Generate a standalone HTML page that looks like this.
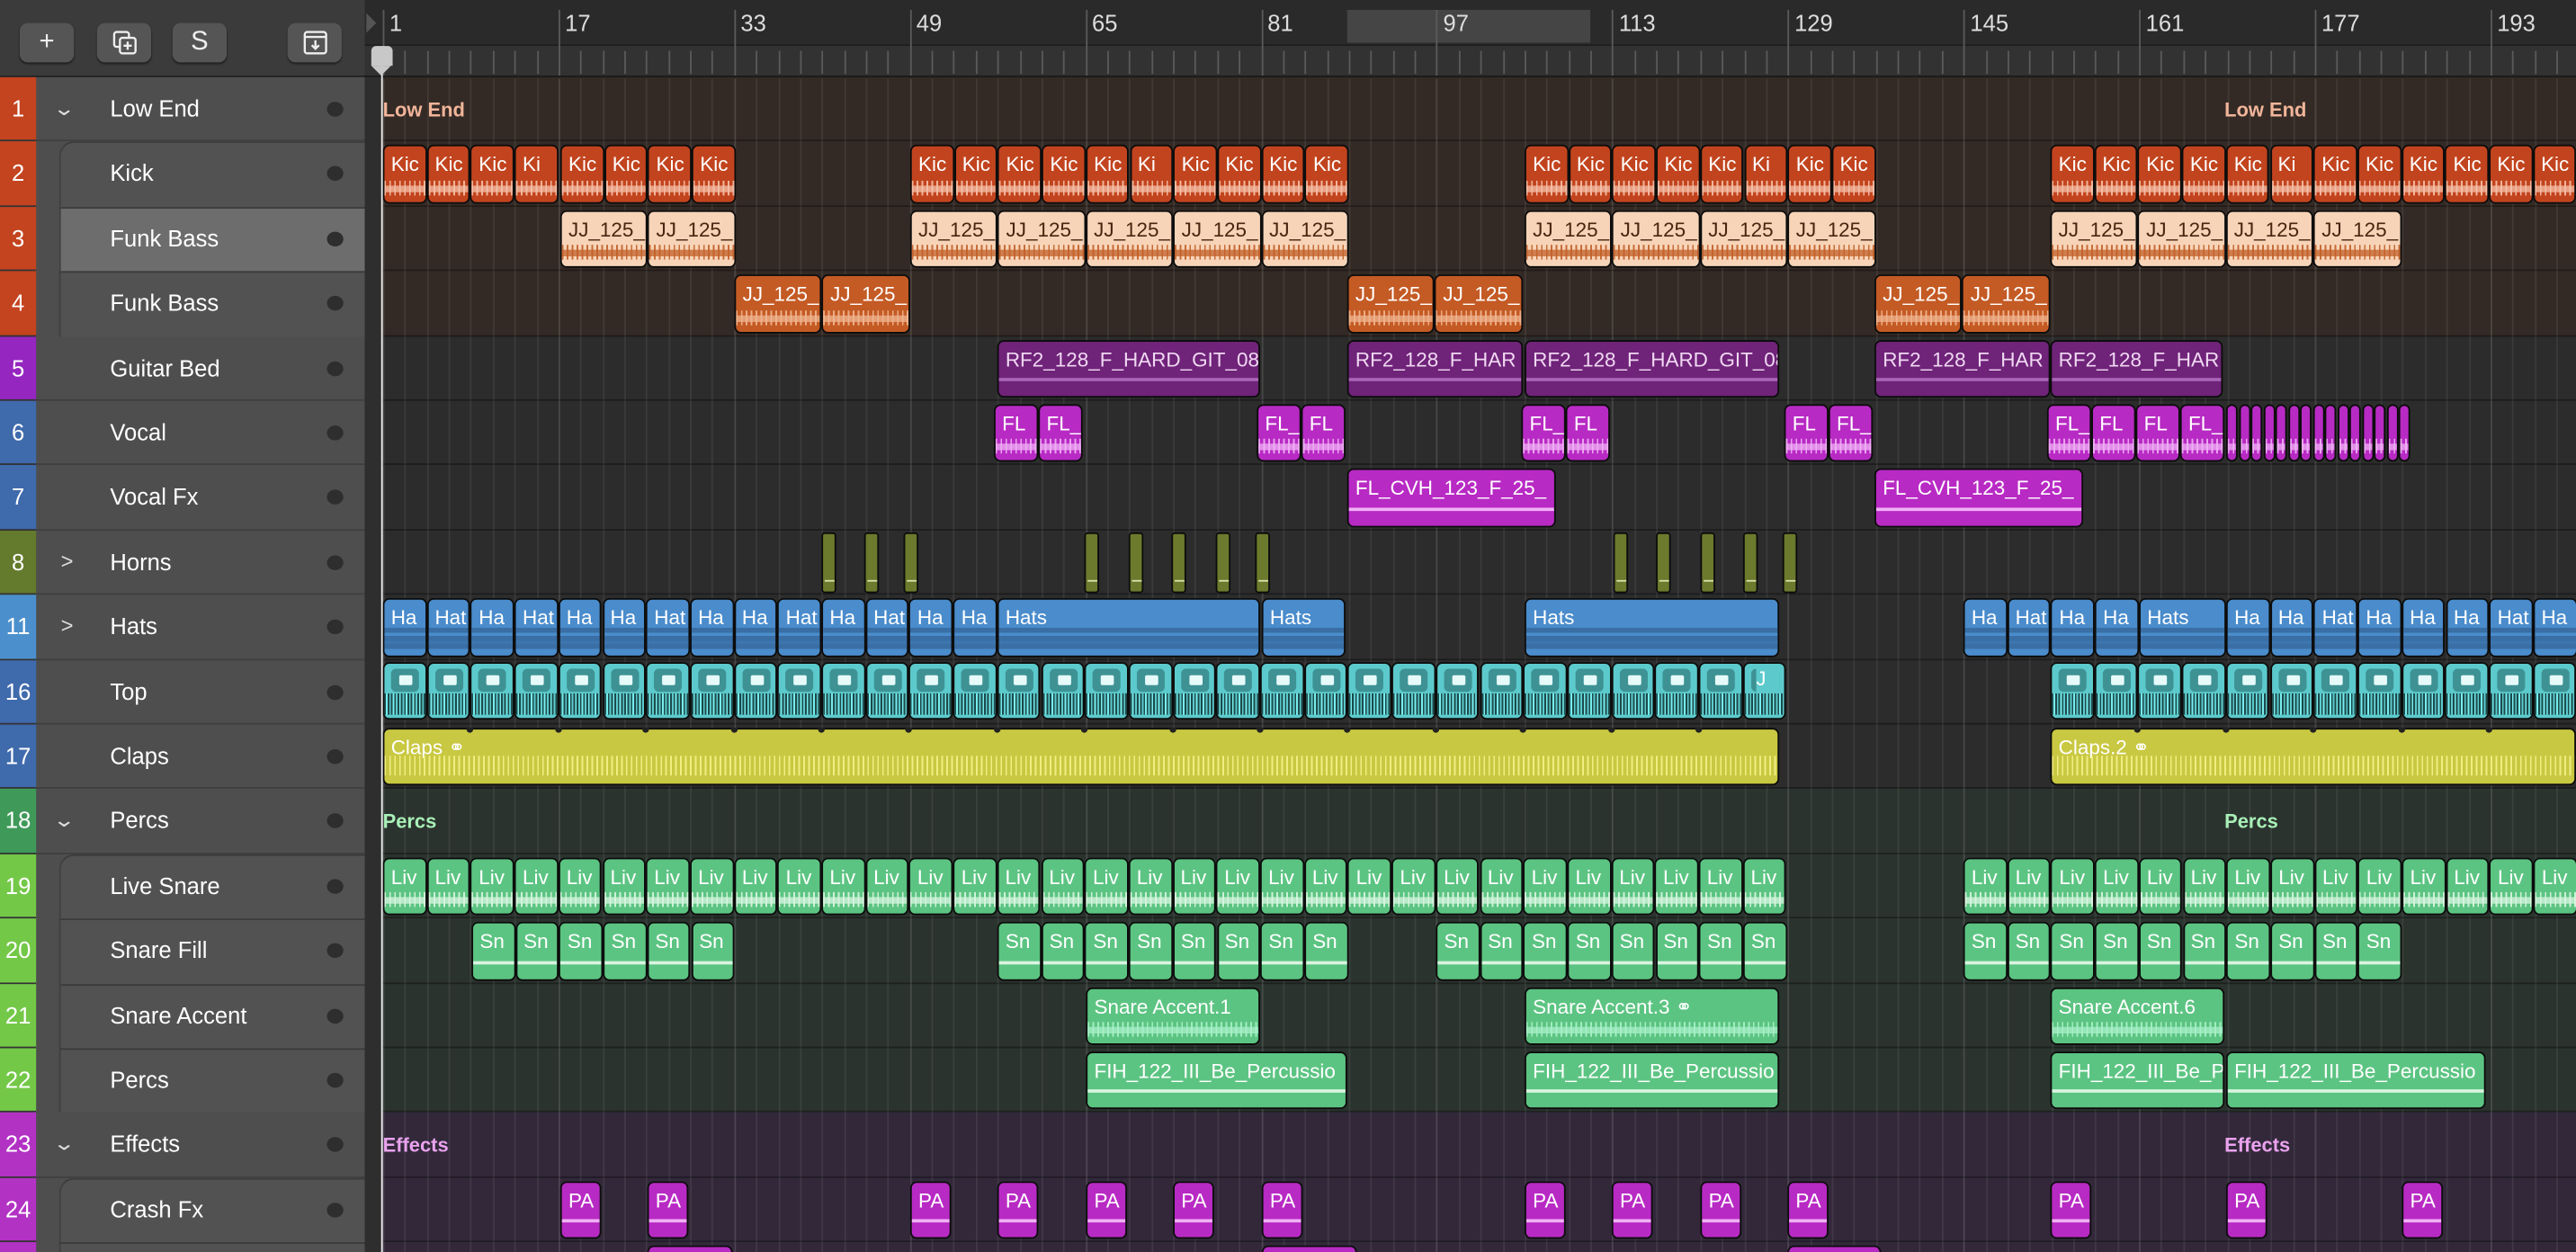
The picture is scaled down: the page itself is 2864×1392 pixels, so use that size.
<!DOCTYPE html>
<html><head><meta charset="utf-8">
<style>
html,body{margin:0;padding:0;background:#2b2b2b;overflow:hidden;width:2864px;height:1392px}
#root{position:absolute;left:0;top:0;width:1568px;height:762px;transform-origin:0 0;transform:scale(1.826531,1.826772);font-family:"Liberation Sans",sans-serif;overflow:hidden;background:#2c2c2c}
.a{position:absolute;box-sizing:border-box}
.rg{position:absolute;box-sizing:border-box;border:1.5px solid #0c0c0c;border-radius:4px;overflow:hidden}
.rg .t{position:absolute;left:4px;top:4px;font-size:12.3px;white-space:nowrap;line-height:15px}
.rg .w{position:absolute;left:0;right:0;bottom:4px;height:9px}
.num{position:absolute;left:0;width:22px;color:#fff;font-size:14px;text-align:center;box-sizing:border-box;border-bottom:1px solid #333}
.tn{position:absolute;color:#fff;font-size:14px}
.dot{position:absolute;width:10px;height:9px;border-radius:50%;background:#2e2e2e}
</style></head><body><div id="root"></div>
<script>
const R=document.getElementById('root');
function el(cls,st,html){const d=document.createElement('div');d.className=cls;d.style.cssText=st;if(html!==undefined)d.innerHTML=html;R.appendChild(d);return d;}
const RH=39.4, Y0=47;
function ry(i){return Y0+i*RH;}
const rowsBg=['#342a25','#342a25','#342a25','#342a25','#2c2c2c','#2c2c2c','#2c2c2c','#2c2c2c','#2c2c2c','#2c2c2c','#2c2c2c','#2b332e','#2b332e','#2b332e','#2b332e','#2b332e','#32283a','#32283a','#32283a'];
rowsBg.forEach((c,i)=>{el('a',`left:222px;top:${ry(i)}px;width:1346px;height:${RH}px;background:${c};border-bottom:1px solid rgba(0,0,0,0.35)`);});
for(let b=1;b<=201;b+=2){const x=233+(b-1)*6.682;el('a',`left:${x}px;top:48px;width:1px;height:720px;background:rgba(255,255,255,${(b-1)%16==0?0.13:0.07})`);}
el('a','left:222px;top:0;width:1346px;height:28px;background:#2a2a2a;border-bottom:1px solid #1e1e1e');
el('a','left:820px;top:6px;width:148px;height:20px;background:#454545');
el('a','left:222px;top:28px;width:1346px;height:19px;background:#323232;border-bottom:1px solid #1a1a1a');
for(let b=1;b<=201;b+=2){const x=233+(b-1)*6.682;el('a',`left:${x}px;top:${(b-1)%16==0?6:31}px;width:1px;height:${(b-1)%16==0?40:14}px;background:#5a5a5a`);}
for(let b=1;b<=193;b+=16){const x=233+(b-1)*6.682;el('a',`left:${x+4}px;top:6px;color:#ddd;font-size:14px`,String(b));}
el('a','left:223px;top:8px;width:0;height:0;border-top:6px solid transparent;border-bottom:6px solid transparent;border-left:6px solid #555');
el('a','left:0;top:0;width:222px;height:47px;background:#3b3b3b;border-bottom:1px solid #222');
const btn=(x,w,h)=>el('a',`left:${x}px;top:14px;width:${w}px;height:24px;border-radius:5px;background:#555;color:#eee;text-align:center;font-size:16px;line-height:24px;box-shadow:0 1px 1px #222`,h);
btn(12,33,'+');btn(59,33,'<svg width="16" height="16" viewBox="0 0 16 16" style="margin-top:4px" fill="none" stroke="#eee" stroke-width="1.3"><rect x="1.5" y="1.5" width="9" height="9" rx="1.5"/><rect x="5" y="5" width="9.5" height="9.5" rx="1.5" fill="#555"/><path d="M9.7 7.3v5M7.2 9.8h5"/></svg>');btn(105,33,'S');
btn(175,33,'<svg width="16" height="16" viewBox="0 0 16 16" style="margin-top:4px" fill="none" stroke="#eee" stroke-width="1.3"><rect x="1.5" y="1.5" width="13" height="13" rx="1.5"/><path d="M1.5 4.5h13M8 6.5v5M5.8 9.5L8 11.7 10.2 9.5"/></svg>');
el('a','left:0;top:47px;width:222px;height:720px;background:#4e4e4e');
el('a','left:222px;top:47px;width:10px;height:720px;background:#2e2e2e');
const tracks=[
['1','Low End','#c4441f','f'],['2','Kick','#c4441f','c'],['3','Funk Bass','#c4441f','c'],['4','Funk Bass','#c4441f','c'],
['5','Guitar Bed','#9526c0',''],['6','Vocal','#3f6aac',''],['7','Vocal Fx','#3f6aac',''],['8','Horns','#647a2c','>'],
['11','Hats','#4b90cc','>'],['16','Top','#3f6aac',''],['17','Claps','#3f6aac',''],['18','Percs','#3f9a5a','f'],
['19','Live Snare','#74c848','c'],['20','Snare Fill','#74c848','c'],['21','Snare Accent','#74c848','c'],['22','Percs','#74c848','c'],
['23','Effects','#b232c4','f'],['24','Crash Fx','#b232c4','c'],['','','#b232c4','c']];
tracks.forEach((t,i)=>{const y=ry(i);
 if(t[3]=='c'){el('a',`left:36px;top:${y}px;width:186px;height:${RH}px;background:${i==2?'#6d6d6d':'#525252'};border-left:1px solid #404040;border-top:1px solid #3c3c3c;${(i==1||i==12||i==17)?'border-top-left-radius:9px;':''}`);}
 else el('a',`left:22px;top:${y}px;width:200px;height:${RH}px;border-bottom:1px solid #404040`);
 el('num',`top:${y}px;height:${RH}px;line-height:${RH}px;background:${t[2]}`,t[0]);
 if(t[1]){el('tn',`left:67px;top:${y+11}px`,t[1]);el('dot',`left:199px;top:${y+15}px`);}
 if(t[3]=='f')el('a',`left:34px;top:${y+12}px;color:#ddd;font-size:12px;transform:scaleX(1.4)`,'&#8964;');
 if(t[3]=='>')el('a',`left:37px;top:${y+11}px;color:#ddd;font-size:13px`,'&gt;');
});
function wave(col,kind){
 if(kind=='line')return `<div class="w" style="height:2px;bottom:9px;background:${col}"></div>`;
 return `<div class="w" style="background:repeating-linear-gradient(90deg,${col} 0 1px,transparent 1px 3px);opacity:.9"></div><div class="w" style="height:4px;bottom:6px;background:${col};opacity:.75"></div>`;
}
function reg(row,x,w,bg,fg,txt,wc,kind){const y=ry(row)+2;const d=el('rg',`left:${x}px;top:${y}px;width:${w}px;height:${RH-4}px;background:${bg}`);
 d.innerHTML=`<div class="t" style="color:${fg}">${txt}</div>`+wave(wc,kind);return d;}
function cells(row,x0,n,w,bg,fg,names,wc,kind){for(let i=0;i<n;i++)reg(row,x0+i*w,w,bg,fg,names[i%names.length],wc,kind);}
const C=26.7;
[[0,'Low End','#f1b59a'],[11,'Percs','#a8f0b8'],[16,'Effects','#eaa2ee']].forEach(f=>{[233,1354].forEach(x=>el('a',`left:${x}px;top:${ry(f[0])+13}px;font-size:12px;font-weight:bold;color:${f[2]}`,f[1]));});
const OR='#c2441e',ORW='#f5c0a8';
cells(1,233,4,C,OR,'#fff',['Kic','Kic','Kic','Ki'],ORW);
cells(1,341,4,C,OR,'#fff',['Kic'],ORW);
cells(1,554,10,C,OR,'#fff',['Kic','Kic','Kic','Kic','Kic','Ki','Kic','Kic','Kic','Kic'],ORW);
cells(1,928,8,C,OR,'#fff',['Kic','Kic','Kic','Kic','Kic','Ki','Kic','Kic'],ORW);
cells(1,1248,12,C,OR,'#fff',['Kic','Kic','Kic','Kic','Kic','Ki','Kic','Kic','Kic','Kic','Kic','Kic'],ORW);
const LB='#f7d4b8';
function bass(row,x,n,bg,fg,wc){cells(row,x,n,53.4,bg,fg,['JJ_125_'],wc);}
bass(2,341,2,LB,'#4a2410','#c2602a');bass(2,554,5,LB,'#4a2410','#c2602a');bass(2,928,4,LB,'#4a2410','#c2602a');bass(2,1248,4,LB,'#4a2410','#c2602a');
bass(3,447,2,'#c45a24','#fff','#f0b590');bass(3,820,2,'#c45a24','#fff','#f0b590');bass(3,1141,2,'#c45a24','#fff','#f0b590');
const PU='#6f2379',PW='#a865b5';
reg(4,607,160,PU,'#f0d8f2','RF2_128_F_HARD_GIT_08',PW,'line');reg(4,820,107,PU,'#f0d8f2','RF2_128_F_HAR',PW,'line');
reg(4,928,155,PU,'#f0d8f2','RF2_128_F_HARD_GIT_08',PW,'line');reg(4,1141,107,PU,'#f0d8f2','RF2_128_F_HAR',PW,'line');reg(4,1248,105,PU,'#f0d8f2','RF2_128_F_HAR',PW,'line');
const MG='#b82ac4',MW='#f0b0f5';
[[605,'FL'],[632,'FL_'],[765,'FL_'],[792,'FL'],[926,'FL_'],[953,'FL'],[1086,'FL'],[1113,'FL_'],[1246,'FL_'],[1273,'FL'],[1300,'FL'],[1327,'FL_']].forEach(v=>reg(5,v[0],27,MG,'#fff',v[1],MW));
for(let x=1355;x<1466;x+=7.5)reg(5,x,7,MG,'#fff','',MW);
reg(6,820,127,MG,'#fff','FL_CVH_123_F_25_',MW,'line');reg(6,1141,127,MG,'#fff','FL_CVH_123_F_25_',MW,'line');
[500,526,550,660,687,713,740,764,982,1008,1035,1061,1085].forEach(x=>{const d=el('rg',`left:${x}px;top:${ry(7)+1}px;width:9px;height:${RH-2}px;background:#6b7a2c;border-radius:2px`);d.innerHTML='<div class="a" style="left:1px;bottom:6px;width:6px;height:1px;background:#d8e0a8"></div>';});
const BL='#4a8ccc',BW='#3a6fa5';
const hw=`left:0;right:0;bottom:3px;height:14px;background:repeating-linear-gradient(180deg,${BW} 0 3px,#4a8ccc 3px 5px)`;
function hats(x,n,names){for(let i=0;i<n;i++){const d=reg(8,x+i*C,C,BL,'#fff',names[i%names.length],BW);d.querySelector('.w').style.cssText=hw;}}
hats(233,14,['Ha','Hat','Ha','Hat','Ha','Ha','Hat','Ha','Ha','Hat','Ha','Hat','Ha','Ha']);
[[607,160],[768,51],[928,155]].forEach(v=>{const d=reg(8,v[0],v[1],BL,'#fff','Hats',BW);d.querySelector('.w').style.cssText=hw;});
hats(1195,4,['Ha','Hat','Ha','Ha']);
{const d=reg(8,1302,53,BL,'#fff','Hats',BW);d.querySelector('.w').style.cssText=hw;}
hats(1355,8,['Ha','Ha','Hat','Ha','Ha','Ha','Hat','Ha']);
function tops(x,n){for(let i=0;i<n;i++){const d=el('rg',`left:${x+i*C}px;top:${ry(9)+1}px;width:${C}px;height:${RH-4}px;background:#5ccacc`);d.innerHTML='<div class="a" style="left:4px;top:3px;width:17px;height:14px;border-radius:3px;background:#3e9294"></div><div class="a" style="left:9px;top:7px;width:8px;height:6px;border-radius:1px;background:#e6fafa"></div><div class="a" style="left:0;right:0;bottom:2px;height:13px;background:repeating-linear-gradient(90deg,#1d4a4c 0 1px,#7ee 1px 2px,#1d4a4c 2px 3px,transparent 3px 4px)"></div>';}}
tops(233,32);tops(1248,12);
el('a',`left:1069px;top:${ry(9)+4}px;width:14px;height:16px;background:#5ccacc;color:#fff;font-size:12px`,'J');
const YE='#c9c842',YW='#f0ee80';
function claps(x,w,name){const d=el('rg',`left:${x}px;top:${ry(10)+2}px;width:${w}px;height:${RH-4}px;background:${YE}`);d.innerHTML=`<div class="t" style="color:#fff">${name} &#9901;</div><div class="w" style="bottom:5px;height:12px;background:repeating-linear-gradient(90deg,${YW} 0 1px,transparent 1px 3px)"></div>`;for(let cx=x+53.4;cx<x+w-2;cx+=53.4)el('a',`left:${cx-2}px;top:${ry(10)+2}px;width:4px;height:3px;background:#222;border-radius:0 0 2px 2px`);}
claps(233,850,'Claps');claps(1248,320,'Claps.2');
const GR='#5cc482',GW='#d8f5e0';
cells(12,233,32,C,GR,'#fff',['Liv'],GW);cells(12,1195,14,C,GR,'#fff',['Liv'],GW);
cells(13,287,6,C,GR,'#fff',['Sn'],GW,'line');cells(13,607,8,C,GR,'#fff',['Sn'],GW,'line');cells(13,874,8,C,GR,'#fff',['Sn'],GW,'line');cells(13,1195,10,C,GR,'#fff',['Sn'],GW,'line');
reg(14,661,106,GR,'#fff','Snare Accent.1','#a8f0c8');reg(14,928,155,GR,'#fff','Snare Accent.3 &#9901;','#a8f0c8');reg(14,1248,106,GR,'#fff','Snare Accent.6','#a8f0c8');
reg(15,661,159,GR,'#fff','FIH_122_III_Be_Percussio',GW,'line');reg(15,928,155,GR,'#fff','FIH_122_III_Be_Percussio',GW,'line');
reg(15,1248,106,GR,'#fff','FIH_122_III_Be_P',GW,'line');reg(15,1355,158,GR,'#fff','FIH_122_III_Be_Percussio',GW,'line');
[341,394,554,607,661,714,768,928,981,1035,1088,1248,1355,1462].forEach(x=>reg(17,x,25,MG,'#fff','PA',MW,'line'));
[[394,52],[768,58],[1088,57]].forEach(v=>el('rg',`left:${v[0]}px;top:${ry(18)+2}px;width:${v[1]}px;height:30px;background:${MG}`));
el('a','left:232px;top:28px;width:1px;height:740px;background:#eee');
el('a','left:226px;top:28px;width:13px;height:12px;background:#c8c8c8;border-radius:3px 3px 0 0');
el('a','left:226px;top:40px;width:0;height:0;border-left:6.5px solid transparent;border-right:6.5px solid transparent;border-top:6px solid #c8c8c8');
</script></body></html>
